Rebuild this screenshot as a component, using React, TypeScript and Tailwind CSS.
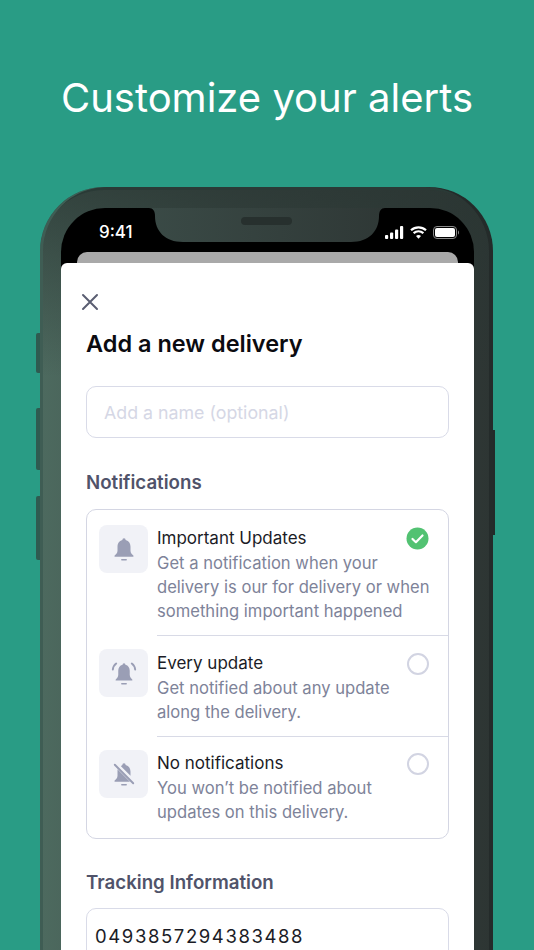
import type { ReactElement } from "react";

const FONT = "font-['Inter','Liberation_Sans',sans-serif]";

const BELL =
  "M12 2a1.5 1.5 0 0 1 1.5 1.6C16.6 4.3 18 7 18 10v3.600c0 2 1.300 3.200 2.600 4.400.5.5.2 1.200-.5 1.200H3.900c-.7 0-1-.7-.5-1.200C4.700 16.800 6 15.600 6 13.600V10c0-3 1.400-5.700 4.500-6.400A1.500 1.500 0 0 1 12 2z";

function BellIcon(): ReactElement {
  return (
    <svg width="26" height="26" viewBox="0 0 24 24" fill="#9a9eb5">
      <path d={BELL} />
      <path d="M10 22h4" stroke="#9a9eb5" strokeWidth="1.400" strokeLinecap="round" />
    </svg>
  );
}

function BellRingIcon(): ReactElement {
  return (
    <svg width="26" height="26" viewBox="0 0 24 24" fill="#9a9eb5">
      <path d="M12 3a1.300 1.300 0 0 1 1.300 1.400C16 5 17.300 7.400 17.300 10v3.600c0 2 1.200 3.200 2.300 4.300.4.500.2 1.100-.5 1.100H4.900c-.7 0-.9-.6-.5-1.100 1.100-1.100 2.300-2.300 2.300-4.300V10c0-2.600 1.300-5 4-5.600A1.300 1.300 0 0 1 12 3z" />
      <path d="M10 22h4" stroke="#9a9eb5" strokeWidth="1.400" strokeLinecap="round" />
      <path
        d="M4.800 3.200C2.900 4.600 1.900 6.600 1.700 8.800M19.200 3.200c1.900 1.400 2.900 3.400 3.100 5.600"
        fill="none"
        stroke="#9a9eb5"
        strokeWidth="1.800"
        strokeLinecap="round"
      />
    </svg>
  );
}

function BellOffIcon(): ReactElement {
  return (
    <svg width="26" height="26" viewBox="0 0 24 24" fill="#9a9eb5">
      <path d="M6 7.600 17.500 19.200H3.900c-.7 0-1-.7-.5-1.200C4.700 16.800 6 15.600 6 13.600z" />
      <path d="M9.200 4.900c.4-.6.800-1 1.300-1.300A1.500 1.500 0 0 1 12 2a1.500 1.500 0 0 1 1.500 1.600C16.600 4.300 18 7 18 10v3.600z" />
      <path d="M10 22h4" stroke="#9a9eb5" strokeWidth="1.400" strokeLinecap="round" />
      <path d="M3.500 3.500 20.500 20.500" stroke="#9a9eb5" strokeWidth="1.800" strokeLinecap="round" />
    </svg>
  );
}

function Option({
  icon,
  title,
  lines,
  checked = false,
  divider = false,
  className = "",
  bodyClassName = "",
}: {
  icon: ReactElement;
  title: string;
  lines: string[];
  checked?: boolean;
  divider?: boolean;
  className?: string;
  bodyClassName?: string;
}): ReactElement {
  return (
    <div className={`flex gap-[9px] pl-[12px] ${className}`}>
      <div className="flex h-[48px] w-[49px] shrink-0 items-center justify-center rounded-[8px] bg-[#f1f2f7]">
        {icon}
      </div>
      <div className={`flex min-w-0 flex-1 justify-between pr-[19px] ${bodyClassName} ${divider ? "border-b-[1.500px] border-[#d8dae6]" : ""}`}>
        <div className="w-0 flex-1 pt-px">
          <div className="mb-px text-[17px] leading-[24px] whitespace-nowrap text-[#1b1c26]">{title}</div>
          {lines.map((line) => (
            <div key={line} className="text-[16.600px] leading-[24px] whitespace-nowrap text-[#7e8399]">
              {line}
            </div>
          ))}
        </div>
        {checked ? (
          <svg width="23" height="23" viewBox="0 0 23 23" className="mt-[2px] shrink-0">
            <circle cx="11.500" cy="11.500" r="11" fill="#52c272" />
            <path d="M6.500 12l3.400 3.200L16.500 8.500" fill="none" stroke="#fff" strokeWidth="2.200" strokeLinecap="round" strokeLinejoin="round" />
          </svg>
        ) : (
          <div className="mt-[3px] h-[22px] w-[22px] shrink-0 rounded-full border-2 border-[#d2d4e2]" />
        )}
      </div>
    </div>
  );
}

export default function App(): ReactElement {
  return (
    <div className={`h-[950px] w-[534px] overflow-hidden bg-[#299c85] ${FONT}`}>
      <h1 className="pt-[72px] text-center text-[40px] leading-[52px] font-normal text-white">
        Customize your alerts
      </h1>

      <div className="relative mt-[63px] ml-[40px] h-[780px] w-[453px] rounded-t-[64px] bg-[linear-gradient(180deg,rgba(42,54,51,0.75)_0px,rgba(42,54,51,0)_190px),linear-gradient(90deg,#4d6a5f_0%,#3c4a46_45%,#2d3533_100%)] pt-[21px] pr-[19px] pl-[21px] shadow-[inset_-4px_0_0_#242b2a,inset_3px_0_0_#3f5d54,inset_0_3px_0_#2a3a36]">
        {/* side buttons */}
        <div className="absolute top-[146px] -left-[4px] h-[40px] w-[4px] rounded-l-[2px] bg-[#2f5a50]" />
        <div className="absolute top-[221px] -left-[4px] h-[62px] w-[4px] rounded-l-[2px] bg-[#2f5a50]" />
        <div className="absolute top-[309px] -left-[4px] h-[64px] w-[4px] rounded-l-[2px] bg-[#2f5a50]" />
        <div className="absolute top-[243px] -right-[2px] h-[105px] w-[2px] bg-[#232a29]" />

        <div className="relative flex h-full flex-col rounded-t-[44px] bg-black">
          {/* notch */}
          <svg width="236" height="35" viewBox="0 0 236 35" className="absolute top-0 left-[88px]">
            <defs>
              <linearGradient id="notch" x1="0" x2="1" y1="0" y2="0">
                <stop offset="0" stopColor="#3a4a46" />
                <stop offset="1" stopColor="#2f3836" />
              </linearGradient>
            </defs>
            <path d="M0 0H236C232 0 230 3 230 8C230 23 220 34 202 34H34C16 34 6 23 6 8C6 3 4 0 0 0Z" fill="url(#notch)" />
          </svg>
          <div className="absolute top-[9px] left-[180px] h-[8px] w-[51px] rounded-full bg-[#27302e]" />

          <div className="flex h-[44px] items-center justify-between pt-[4px] pr-[15px] pl-[38px]">
            <span className="text-[17px] leading-none font-medium text-white">9:41</span>
            <div className="flex items-center gap-[6px]">
              <svg width="19" height="13" viewBox="0 0 19 13" fill="#fff">
                <rect x="0" y="9" width="3.200" height="4" rx="1" />
                <rect x="5" y="6.500" width="3.200" height="6.500" rx="1" />
                <rect x="10" y="3.500" width="3.200" height="9.500" rx="1" />
                <rect x="15" y="0" width="3.200" height="13" rx="1" />
              </svg>
              <svg width="17" height="13" viewBox="0 0 17 13" fill="none" stroke="#fff" strokeWidth="2.200">
                <path d="M1 4.300C5.300.400 11.700.400 16 4.300" />
                <path d="M3.600 7.200C6.500 4.700 10.500 4.700 13.400 7.200" />
                <path d="M8.500 12.800 6 10c1.500-1.200 3.500-1.200 5 0z" fill="#fff" stroke="none" />
              </svg>
              <svg width="26" height="13" viewBox="0 0 26 13" fill="none">
                <rect x=".5" y=".5" width="23" height="12" rx="3.500" stroke="#8a8a8a" />
                <rect x="2" y="2" width="20" height="9" rx="2" fill="#fff" />
                <path d="M25 4.500v4c.7-.3 1-1.200 1-2s-.3-1.700-1-2z" fill="#8a8a8a" />
              </svg>
            </div>
          </div>

          <div className="mx-[16px] h-[11px] shrink-0 rounded-t-[10px] bg-[#a9a9a9]" />

          <div className="flex-1 rounded-t-[6px] bg-white px-[25px]">
            <svg width="18" height="18" viewBox="0 0 18 18" className="mt-[30px] -ml-[5px]" fill="none" stroke="#5a5e72" strokeWidth="2" strokeLinecap="round">
              <path d="M2 2l14 14M16 2 2 16" />
            </svg>
            <h2 className="mt-[17px] text-[23.500px] leading-[32px] font-semibold text-[#0b0b10]">Add a new delivery</h2>

            <div className="mt-[26px] flex h-[52px] w-[363px] items-center rounded-[10px] border-[1.500px] border-[#d9dbe8] px-[17px] pt-[2px] text-[17.800px] text-[#d5d7e5]">
              Add a name (optional)
            </div>

            <div className="mt-[33px] text-[18.700px] leading-[24px] font-semibold text-[#50536a]">Notifications</div>

            <div className="mt-[14px] w-[363px] rounded-[10px] border-[1.500px] border-[#d4d6e3] pt-[15px]">
              <Option
                icon={<BellIcon />}
                title="Important Updates"
                lines={[
                  "Get a notification when your",
                  "delivery is our for delivery or when",
                  "something important happened",
                ]}
                checked
                divider
                className="h-[111px]"
              />
              <Option
                icon={<BellRingIcon />}
                title="Every update"
                lines={["Get notified about any update", "along the delivery."]}
                divider
                bodyClassName="pt-px"
                className="h-[101px] pt-[13px]"
              />
              <Option
                icon={<BellOffIcon />}
                title="No notifications"
                lines={["You won’t be notified about", "updates on this delivery."]}
                className="h-[101px] pt-[13px]"
              />
            </div>

            <div className="mt-[32px] text-[18.700px] leading-[24px] font-semibold text-[#50536a]">Tracking Information</div>

            <div className="mt-[13px] flex h-[58px] w-[363px] items-center rounded-[10px] border-[1.500px] border-[#d9dbe8] px-[8px] text-[18.500px] tracking-[1.600px] text-[#1b1c26]">
              0493857294383488
            </div>
          </div>
        </div>
      </div>
    </div>
  );
}
